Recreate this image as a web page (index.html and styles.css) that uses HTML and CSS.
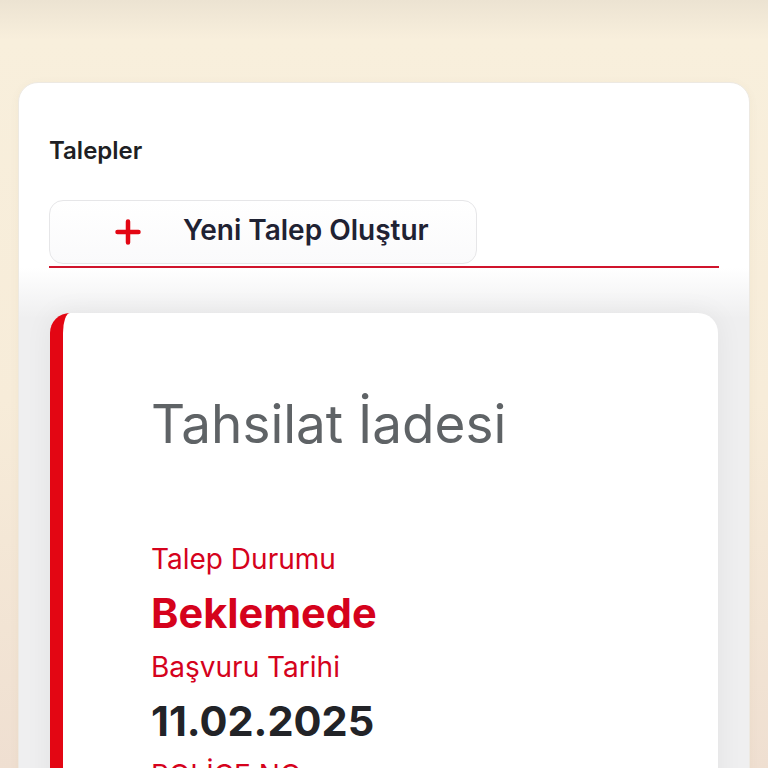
FILE: index.html
```html
<!DOCTYPE html>
<html lang="tr">
<head>
    <meta charset="UTF-8">
    <meta name="viewport" content="width=device-width, initial-scale=1.0">
    <title>Talepler</title>
    <link rel="stylesheet" href="styles.css">
</head>
<body>
    <div class="page">
        <div class="panel">
            <h1 class="panel-title">Talepler</h1>

            <div class="tabs">
                <button class="new-btn">
                    <svg class="plus" width="28" height="28" viewBox="0 0 28 28">
                        <path d="M14 3.5v21M3.5 14h21" stroke="#e30613" stroke-width="4.5" stroke-linecap="round" fill="none"/>
                    </svg>
                    <span>Yeni Talep Oluştur</span>
                </button>
            </div>

            <!-- Request card -->
            <div class="request-card">
                <h2 class="request-type">Tahsilat İadesi</h2>
                <div class="field">
                    <div class="field-label">Talep Durumu</div>
                    <div class="field-value status">Beklemede</div>
                </div>
                <div class="field">
                    <div class="field-label">Başvuru Tarihi</div>
                    <div class="field-value">11.02.2025</div>
                </div>
                <div class="field">
                    <div class="field-label">POLİÇE NO</div>
                    <div class="field-value">—</div>
                </div>
            </div>
        </div>
    </div>
</body>
</html>
```

FILE: styles.css
```css
body {
    margin: 0;
    font-family: Inter, "Noto Sans", sans-serif;
    background: linear-gradient(to bottom, #ece3d2 0, #f8efdc 40px, #f7ecd9 400px, #efdfd1 768px);
    min-height: 768px;
    overflow: hidden;
}
.page {
    padding: 82px 18px 0;
}
.panel {
    background: linear-gradient(to bottom, #fff 0, #fff 185px, #efeff0 235px);
    border: 1px solid #ede9e2;
    border-radius: 20px;
    padding: 53px 30px 40px;
    box-shadow: 0 2px 10px rgba(120, 90, 40, 0.05);
}
.panel-title {
    margin: 0;
    font-size: 24px;
    line-height: 30px;
    font-weight: 600;
    color: #1e1f24;
}
.tabs {
    margin-top: 34px;
    border-bottom: 2px solid #d0142c;
    padding-bottom: 2px;
}
.new-btn {
    display: flex;
    align-items: center;
    gap: 41px;
    width: 428px;
    height: 64px;
    padding: 0 0 4px 64px;
    background: linear-gradient(to bottom, #fff, #fafafb);
    border: 1px solid #e6e6e8;
    border-radius: 14px;
    font-family: inherit;
    font-size: 28px;
    font-weight: 600;
    color: #1f2233;
    cursor: pointer;
}
.plus {
    flex: none;
    margin-top: 4px;
}
.request-card {
    margin: 45px 1px 0 1px;
    background: #fff;
    border-left: 13px solid #e30613;
    border-radius: 20px;
    padding: 79px 30px 40px 88px;
    box-shadow: 0 0 28px rgba(0, 0, 0, 0.06);
}
.request-type {
    margin: 0 0 86px;
    font-size: 53px;
    line-height: 64px;
    font-weight: 400;
    color: #5f6366;
}
.field {
    margin-bottom: 13px;
}
.field-label {
    font-size: 28px;
    line-height: 34px;
    color: #d5021c;
    margin-bottom: 13px;
}
.field-value {
    font-size: 41.5px;
    line-height: 48px;
    font-weight: 700;
    color: #222327;
}
.field-value.status {
    color: #d5021c;
}
```
